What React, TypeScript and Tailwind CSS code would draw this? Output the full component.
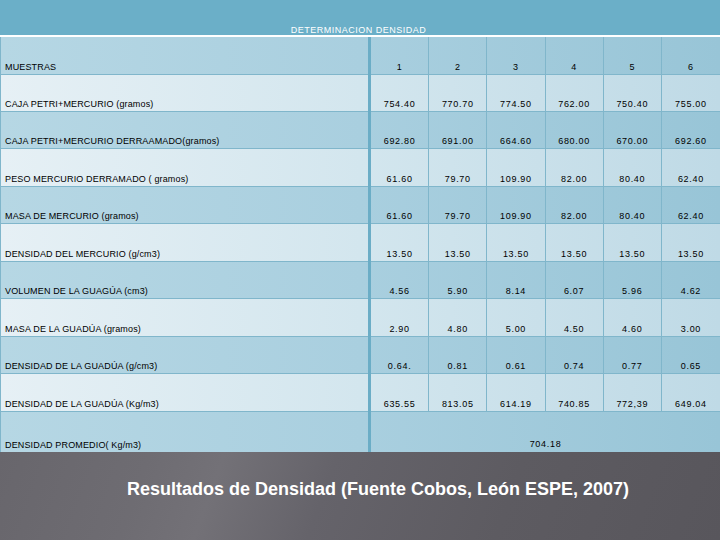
import React from "react";

const rows: { label: string; values: string[] }[] = [
  { label: "CAJA PETRI+MERCURIO (gramos)", values: ["754.40", "770.70", "774.50", "762.00", "750.40", "755.00"] },
  { label: "CAJA PETRI+MERCURIO DERRAAMADO(gramos)", values: ["692.80", "691.00", "664.60", "680.00", "670.00", "692.60"] },
  { label: "PESO MERCURIO DERRAMADO ( gramos)", values: ["61.60", "79.70", "109.90", "82.00", "80.40", "62.40"] },
  { label: "MASA DE MERCURIO (gramos)", values: ["61.60", "79.70", "109.90", "82.00", "80.40", "62.40"] },
  { label: "DENSIDAD DEL MERCURIO (g/cm3)", values: ["13.50", "13.50", "13.50", "13.50", "13.50", "13.50"] },
  { label: "VOLUMEN DE LA GUAGÚA (cm3)", values: ["4.56", "5.90", "8.14", "6.07", "5.96", "4.62"] },
  { label: "MASA DE LA GUADÚA (gramos)", values: ["2.90", "4.80", "5.00", "4.50", "4.60", "3.00"] },
  { label: "DENSIDAD DE LA GUADÚA (g/cm3)", values: ["0.64.", "0.81", "0.61", "0.74", "0.77", "0.65"] },
  { label: "DENSIDAD DE LA GUADÚA (Kg/m3)", values: ["635.55", "813.05", "614.19", "740.85", "772,39", "649.04"] },
];

const heights = ["h-[37px]", "h-[37px]", "h-[38px]", "h-[37px]", "h-[38px]", "h-[37px]", "h-[38px]", "h-[37px]", "h-[38px]"];

const dark = "bg-[linear-gradient(90deg,#b6d7e4_0%,#a9cfdf_50%,#98c5d7_100%)]";
const light = "bg-[linear-gradient(90deg,#e6f0f5_0%,#d3e6ee_50%,#bfdae6_100%)]";

function Row({ label, values, h, bg }: { label: string; values: string[]; h: string; bg: string }) {
  return (
    <div className={`grid grid-cols-[367px_3px_repeat(6,1fr)] ${h} ${bg}`}>
      <div className="flex items-end border-b border-[#80b6cb] pl-[4px] pb-[2px] text-[9px] leading-none tracking-[0.15px]">
        {label}
      </div>
      <div className="bg-[#6badc6]" />
      {values.map((v, i) => (
        <div
          key={i}
          className={`flex items-end justify-center border-b border-[#80b6cb] pb-[2px] text-[9px] leading-none tracking-[0.7px] ${i < 5 ? "border-r" : ""}`}
        >
          {v}
        </div>
      ))}
    </div>
  );
}

export default function App() {
  return (
    <div className="w-[720px] h-[540px] overflow-hidden text-black font-['Liberation_Sans',Arial,sans-serif] flex flex-col">
      <div className="h-[35px] bg-[#6bafc8] flex items-end justify-center text-white text-[9px] leading-none tracking-[0.5px] pr-[3px]">
        DETERMINACION DENSIDAD
      </div>
      <div className="h-[2px] bg-white" />
      <div className="border-l border-[#80b6cb]">
        <Row label="MUESTRAS" values={["1", "2", "3", "4", "5", "6"]} h="h-[38px]" bg={dark} />
        {rows.map((r, i) => (
          <Row key={i} label={r.label} values={r.values} h={heights[i]} bg={i % 2 === 0 ? light : dark} />
        ))}
        <div className={`grid grid-cols-[367px_3px_1fr] h-[40px] ${dark}`}>
          <div className="flex items-end pl-[4px] pb-[2px] text-[9px] leading-none tracking-[0.15px]">
            DENSIDAD PROMEDIO( Kg/m3)
          </div>
          <div className="bg-[#6badc6]" />
          <div className="flex items-end justify-center pb-[3px] text-[9px] leading-none tracking-[0.7px]">704.18</div>
        </div>
      </div>
      <div className="flex-1 bg-[linear-gradient(110deg,#68666c_0%,#6e6c72_20%,#737177_30%,#65636a_45%,#5d5b61_70%,#58565c_100%)] pt-[27px] pl-[36px]">
        <div className="text-center text-white font-bold text-[18px] leading-[20px]">
          Resultados de Densidad (Fuente Cobos, León ESPE, 2007)
        </div>
      </div>
    </div>
  );
}
